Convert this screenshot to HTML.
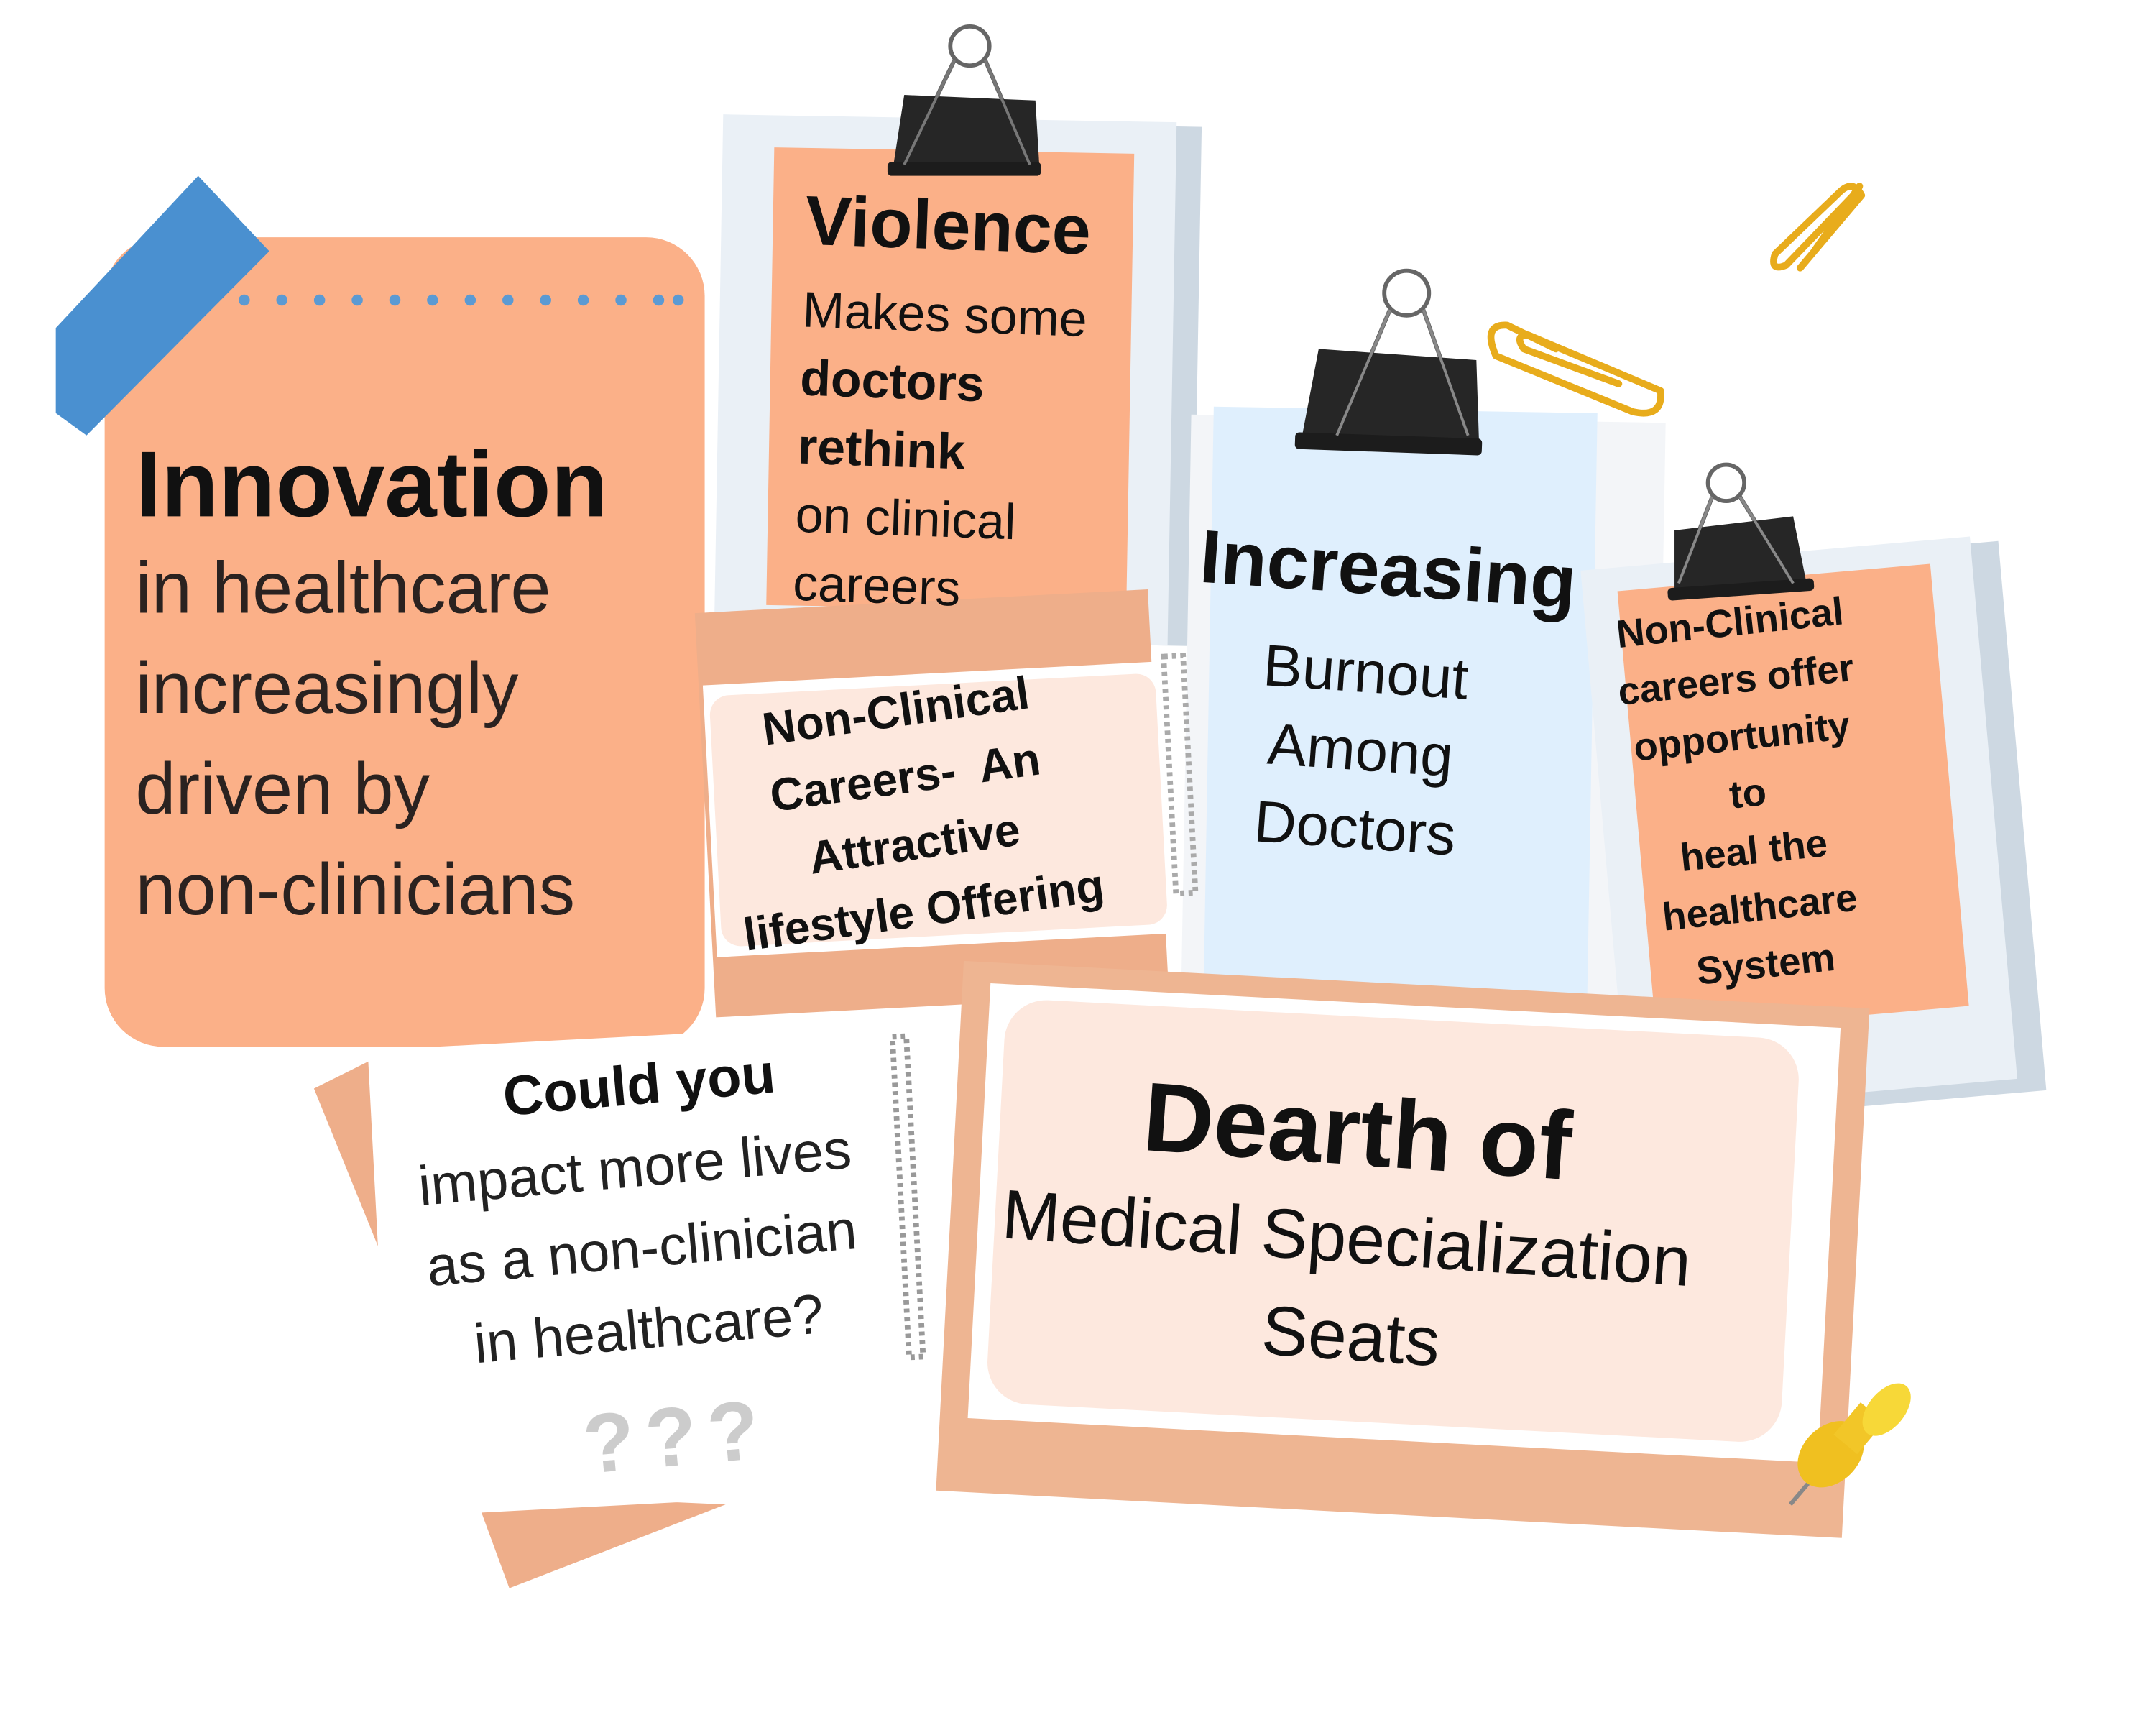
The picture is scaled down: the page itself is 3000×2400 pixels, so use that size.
<!DOCTYPE html>
<html><head><meta charset="utf-8"><style>
html,body{margin:0;padding:0;background:#fff;width:3000px;height:2400px;overflow:hidden}
#s{position:absolute;left:0;top:0;width:1545px;height:1236px;transform:scale(1.9417);transform-origin:0 0;font-family:"Liberation Sans","DejaVu Sans",sans-serif;color:#111}
.a{position:absolute}
.t{position:absolute;white-space:nowrap;line-height:1}
</style></head><body><div id="s">

<svg class="a" style="left:0;top:0" width="1545" height="1236">
  <rect x="75" y="170" width="430" height="580" rx="42" fill="#fbb088"/>
  <polygon points="40,235 142,126 193,180 62,312 40,296" fill="#4a90d0"/>
  <g fill="#5b9ad3">
    <circle cx="175" cy="215" r="4"/><circle cx="202" cy="215" r="4"/><circle cx="229" cy="215" r="4"/><circle cx="256" cy="215" r="4"/><circle cx="283" cy="215" r="4"/><circle cx="310" cy="215" r="4"/><circle cx="337" cy="215" r="4"/><circle cx="364" cy="215" r="4"/><circle cx="391" cy="215" r="4"/><circle cx="418" cy="215" r="4"/><circle cx="445" cy="215" r="4"/><circle cx="472" cy="215" r="4"/><circle cx="486" cy="215" r="4"/>
  </g>
  <g transform="rotate(1 690 270)">
    <rect x="518" y="88" width="340" height="372" fill="#cdd8e2"/>
    <rect x="515" y="85" width="325" height="375" fill="#eaf0f6"/>
    <rect x="552" y="108" width="258" height="328" fill="#fbb088"/>
  </g>
  <g transform="rotate(-3 680 570)">
    <rect x="505" y="430" width="325" height="290" fill="#eeae8a"/>
    <rect x="508" y="482" width="370" height="195" fill="#fff"/>
    <rect x="512" y="490" width="320" height="180" rx="14" fill="#fde8de"/>
  </g>
  <g transform="rotate(1 1020 510)">
    <rect x="850" y="300" width="340" height="435" fill="#f3f5f8"/>
    <rect x="866" y="294" width="275" height="425" fill="#dfeffd"/>
  </g>
  <g transform="rotate(-5 1300 600)">
    <rect x="1160" y="400" width="290" height="395" fill="#cdd8e2"/>
    <rect x="1150" y="395" width="280" height="390" fill="#eaf0f6"/>
    <rect x="1175" y="412" width="225" height="318" fill="#fbb088"/>
  </g>
  <polygon points="225,780 275,755 290,940" fill="#eeae8a"/>
  <polygon points="340,1070 520,1078 365,1138" fill="#eeae8a"/>
  <g transform="rotate(-3 470 910)">
    <rect x="272" y="742" width="398" height="335" fill="#fff"/>
    <rect x="648" y="752" width="10" height="230" fill="none" stroke="#999" stroke-dasharray="3 3" stroke-width="4"/>
  </g>
  <g transform="rotate(3 1000 900)">
    <rect x="680" y="705" width="650" height="380" fill="#eeb592"/>
    <rect x="700" y="720" width="610" height="312" fill="#fff"/>
    <rect x="712" y="730" width="570" height="290" rx="30" fill="#fde8de"/>
  </g>
  <rect x="838" y="470" width="14" height="170" fill="none" stroke="#aaa" stroke-dasharray="3 3" stroke-width="4" transform="rotate(-3 845 550)"/>
  <!-- clips -->
  <g fill="none" stroke="#666" stroke-width="3">
    <circle cx="695" cy="33" r="14"/><path d="M684 43 L648 118 M706 43 L738 118"/>
    <circle cx="1008" cy="210" r="16"/><path d="M996 222 L958 312 M1020 222 L1052 312"/>
    <circle cx="1237" cy="346" r="13"/><path d="M1227 356 L1203 418 M1247 356 L1285 418"/>
  </g>
  <polygon points="648,68 742,72 745,122 640,120" fill="#262626"/>
  <rect x="636" y="116" width="110" height="10" rx="3" fill="#1c1c1c"/>
  <g fill="none" stroke="#777" stroke-width="2"><path d="M684 43 L648 118 M706 43 L738 118"/></g>
  <polygon points="945,250 1058,258 1060,320 932,318" fill="#262626"/>
  <rect x="928" y="312" width="134" height="12" rx="3" fill="#1c1c1c" transform="rotate(2 995 318)"/>
  <polygon points="1200,380 1285,370 1295,420 1200,428" fill="#262626"/>
  <rect x="1195" y="418" width="105" height="9" rx="3" fill="#1c1c1c" transform="rotate(-4 1245 422)"/>
  <g fill="none" stroke="#888" stroke-width="2">
    <path d="M996 222 L958 312 M1020 222 L1052 312"/><path d="M1227 356 L1203 418 M1247 356 L1285 418"/>
  </g>
  <!-- paperclips -->
  <g fill="none" stroke="#e8ac1c" stroke-width="5" stroke-linecap="round" stroke-linejoin="round">
    <path d="M1115 250 L1080 233 Q1062 232 1072 255 L1170 295 Q1192 300 1190 280 L1095 240 Q1085 240 1092 250 L1160 275"/>
    <path d="M1300 180 L1328 140 Q1336 128 1330 138 L1280 190 Q1268 195 1272 182 L1318 138 Q1328 128 1334 140 L1290 192"/>
  </g>
  <!-- pushpin -->
  <line x1="1283" y1="1078" x2="1305" y2="1052" stroke="#888" stroke-width="3"/>
  <ellipse cx="1312" cy="1042" rx="27" ry="20" fill="#f0c020" transform="rotate(-45 1312 1042)"/>
  <rect x="1322" y="1008" width="22" height="30" fill="#f2c628" transform="rotate(40 1332 1022)"/>
  <ellipse cx="1352" cy="1010" rx="22" ry="13" fill="#f7d838" transform="rotate(-50 1352 1010)"/>
</svg>

<div class="t" style="left:97px;top:314px;font-size:67px;font-weight:bold">Innovation</div>
<div class="t" style="left:97px;top:386px;font-size:52px;line-height:72px;color:#2a2220">in healthcare<br>increasingly<br>driven by<br>non-clinicians</div>

<div class="t" style="left:578px;top:133px;font-size:50px;font-weight:bold;transform:rotate(2deg);transform-origin:0 0">Violence</div>
<div class="t" style="left:576px;top:197px;font-size:36px;line-height:49px;transform:rotate(2deg);transform-origin:0 0">Makes some<br><b>doctors<br>rethink</b><br>on clinical<br>careers</div>

<div class="t" style="left:482px;top:485px;width:340px;text-align:center;font-size:33px;font-weight:bold;line-height:48px;transform:rotate(-8deg)">Non-Clinical<br>Careers-&nbsp; An<br>Attractive<br>lifestyle Offering</div>

<div class="t" style="left:862px;top:372px;font-size:54px;font-weight:bold;transform:rotate(4deg);transform-origin:0 0">Increasing</div>
<div class="t" style="left:866px;top:446px;width:230px;text-align:center;font-size:42px;line-height:56px;transform:rotate(4deg);transform-origin:0 0">Burnout<br>Among<br>Doctors</div>

<div class="t" style="left:1145px;top:425px;width:215px;text-align:center;font-size:28px;font-weight:bold;line-height:41px;transform:rotate(-6deg)">Non-Clinical<br>careers offer<br>opportunity<br>to<br>heal the<br>healthcare<br>System</div>

<div class="t" style="left:288px;top:758px;width:340px;text-align:center;font-size:40px;font-weight:bold;transform:rotate(-5deg)">Could you</div>
<div class="t" style="left:275px;top:808px;width:370px;text-align:center;font-size:40px;line-height:58px;color:#222;transform:rotate(-5deg)">impact more lives<br>as a non-clinician<br>in healthcare?</div>
<div class="t" style="left:418px;top:1000px;font-size:60px;font-weight:bold;color:#ccc;letter-spacing:8px;transform:rotate(-5deg)">???</div>

<div class="t" style="left:822px;top:765px;font-size:70px;font-weight:bold;transform:rotate(4deg);transform-origin:0 0">Dearth of</div>
<div class="t" style="left:720px;top:845px;font-size:50px;transform:rotate(4deg);transform-origin:0 0">Medical Specialization</div>
<div class="t" style="left:906px;top:928px;font-size:50px;transform:rotate(4deg);transform-origin:0 0">Seats</div>

</div></body></html>
